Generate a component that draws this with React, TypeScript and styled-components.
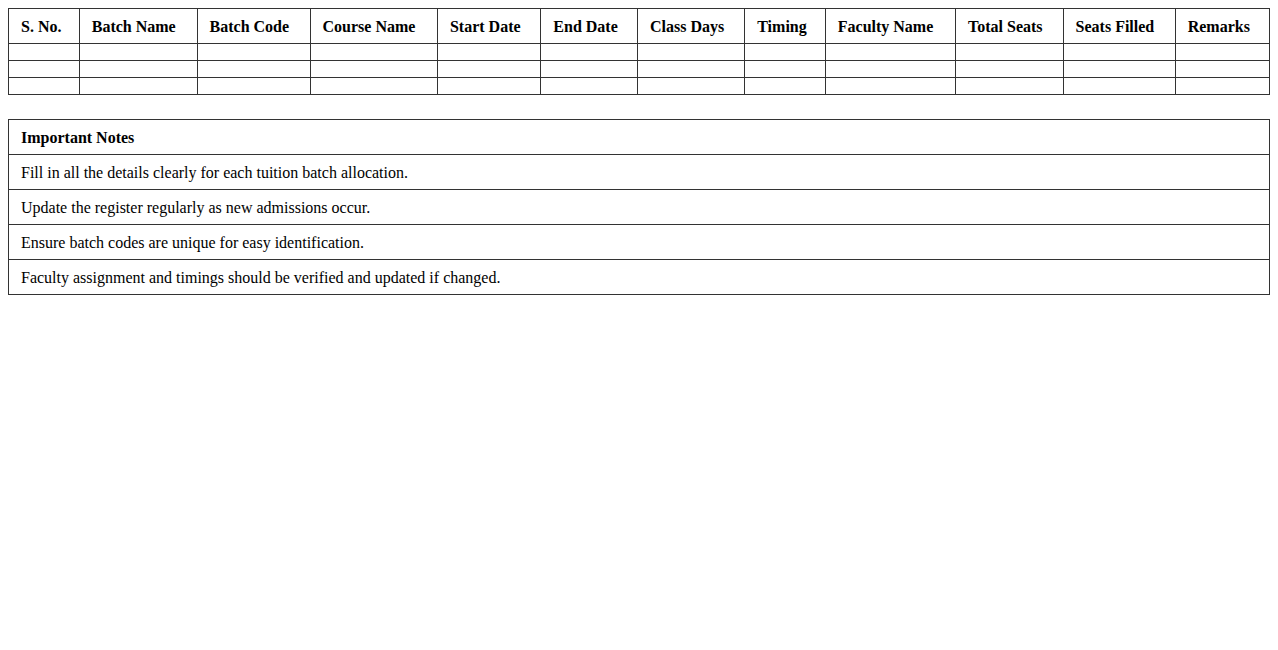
import React from "react";
import styled, { createGlobalStyle } from "styled-components";

const GlobalStyle = createGlobalStyle`
  body {
    margin: 8px;
    font-family: "Liberation Serif", "Times New Roman", serif;
    font-size: 16px;
    color: #000;
    background: #fff;
  }
`;

const Table = styled.table<{ $gap?: number }>`
  width: 100%;
  border-collapse: collapse;
  margin-bottom: ${(p) => p.$gap ?? 0}px;
  font-family: "Liberation Serif", "Times New Roman", serif;
  font-size: 16px;
`;

const Th = styled.th`
  border: 1px solid #333;
  padding: 9px 12px 7px;
  text-align: left;
  font-weight: bold;
  line-height: 18px;
`;

const Td = styled.td`
  border: 1px solid #333;
  padding: 9px 12px 7px;
  text-align: left;
  line-height: 18px;
`;

const headers = [
  "S. No.",
  "Batch Name",
  "Batch Code",
  "Course Name",
  "Start Date",
  "End Date",
  "Class Days",
  "Timing",
  "Faculty Name",
  "Total Seats",
  "Seats Filled",
  "Remarks",
];

const notes = [
  "Fill in all the details clearly for each tuition batch allocation.",
  "Update the register regularly as new admissions occur.",
  "Ensure batch codes are unique for easy identification.",
  "Faculty assignment and timings should be verified and updated if changed.",
];

export default function App() {
  return (
    <>
      <GlobalStyle />
      <Table $gap={24}>
        <thead>
          <tr>
            {headers.map((h) => (
              <Th key={h}>{h}</Th>
            ))}
          </tr>
        </thead>
        <tbody>
          {[0, 1, 2].map((r) => (
            <tr key={r}>
              {headers.map((h) => (
                <Td key={h}></Td>
              ))}
            </tr>
          ))}
        </tbody>
      </Table>
      <Table>
        <thead>
          <tr>
            <Th>Important Notes</Th>
          </tr>
        </thead>
        <tbody>
          {notes.map((n) => (
            <tr key={n}>
              <Td>{n}</Td>
            </tr>
          ))}
        </tbody>
      </Table>
    </>
  );
}
